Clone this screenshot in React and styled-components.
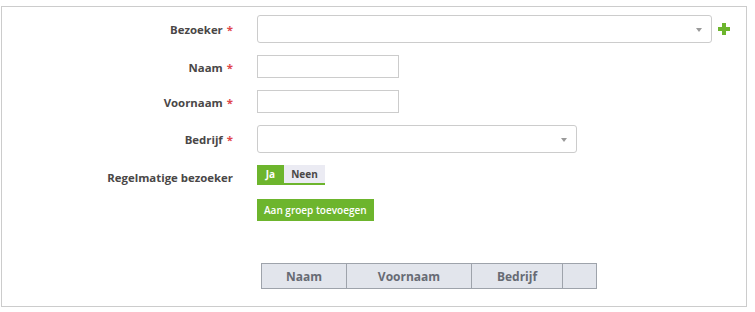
import React from "react";
import styled, { createGlobalStyle, css } from "styled-components";

const GlobalStyle = createGlobalStyle`
  html, body {
    margin: 0;
    background: #ffffff;
  }
  body {
    padding: 6px 0 0 1px;
    font-family: "Open Sans", "Liberation Sans", sans-serif;
  }
`;

const colors = {
  label: "#4a4747",
  star: "#e0474c",
  border: "#cccccc",
  green: "#6db52d",
  toggleOff: "#ebebf3",
  headBg: "#e2e5ec",
  headBorder: "#9ea3ab",
  headText: "#676b74",
};

const App = () => {
  return (
    <>
      <GlobalStyle />
      <Panel>
        <Form>
          <Label required top={7}>Bezoeker</Label>
          <Field>
            <Select wide />
            <AddButton aria-label="add">
              <svg width="12" height="12" viewBox="0 0 12 12">
                <path d="M4 0h4v4h4v4H8v4H4V8H0V4h4z" fill={colors.green} />
              </svg>
            </AddButton>
          </Field>

          <Label required>Naam</Label>
          <Field>
            <TextInput />
          </Field>

          <Label required>Voornaam</Label>
          <Field>
            <TextInput />
          </Field>

          <Label required top={7}>Bedrijf</Label>
          <Field>
            <Select />
          </Field>

          <Label>Regelmatige bezoeker</Label>
          <Field>
            <Toggle>
              <ToggleOption active>Ja</ToggleOption>
              <ToggleOption>Neen</ToggleOption>
            </Toggle>
          </Field>

          <Spacer />
          <Field>
            <GreenButton>Aan groep toevoegen</GreenButton>
          </Field>
        </Form>

        <TableWrap>
          <Table>
            <thead>
              <tr>
                <Th width={85}>Naam</Th>
                <Th width={125}>Voornaam</Th>
                <Th width={91}>Bedrijf</Th>
                <Th width={34}></Th>
              </tr>
            </thead>
          </Table>
        </TableWrap>
      </Panel>
    </>
  );
};

const Select = ({ wide }) => (
  <SelectBox wide={wide ? 1 : 0}>
    <Caret />
  </SelectBox>
);

const Panel = styled.div`
  width: 744px;
  height: 299px;
  border: 1px solid ${colors.border};
  box-sizing: content-box;
`;

const Form = styled.div`
  display: grid;
  grid-template-columns: 231px 1fr;
  column-gap: 24px;
  row-gap: 12px;
  padding-top: 8px;
  align-items: start;
`;

const Label = styled.div`
  text-align: right;
  font-size: 11.4px;
  line-height: 16px;
  font-weight: 700;
  padding-top: ${({ top }) => top || 5}px;
  color: ${colors.label};
  white-space: nowrap;

  ${({ required }) =>
    required &&
    css`
      &::after {
        content: "*";
        color: ${colors.star};
        margin-left: 4px;
      }
    `}
`;

const Spacer = styled.div``;

const Field = styled.div`
  display: flex;
  align-items: center;
`;

const SelectBox = styled.div`
  position: relative;
  box-sizing: border-box;
  width: ${({ wide }) => (wide ? "455px" : "320px")};
  height: 28px;
  border: 1px solid ${colors.border};
  border-radius: 3px;
  background: #fff;
`;

const Caret = styled.span`
  position: absolute;
  right: 9px;
  top: 12px;
  width: 0;
  height: 0;
  border-left: 3px solid transparent;
  border-right: 3px solid transparent;
  border-top: 4px solid #9a9a9a;
`;

const AddButton = styled.span`
  display: flex;
  margin-left: 6px;
`;

const TextInput = styled.input`
  box-sizing: border-box;
  width: 142px;
  height: 23px;
  border: 1px solid ${colors.border};
  border-radius: 0;
  outline: none;
  margin: 0;
`;

const Toggle = styled.div`
  display: flex;
  border-bottom: 2px solid ${colors.green};
  height: 20px;
  box-sizing: border-box;
`;

const ToggleOption = styled.div`
  display: flex;
  align-items: center;
  justify-content: center;
  font-size: 10px;
  font-weight: 700;
  color: ${({ active }) => (active ? "#ffffff" : colors.label)};
  background: ${({ active }) => (active ? colors.green : colors.toggleOff)};
  width: ${({ active }) => (active ? "27px" : "41px")};
  box-sizing: border-box;
`;

const GreenButton = styled.button`
  margin-top: 1px;
  height: 22px;
  padding: 0 7px;
  border: none;
  background: ${colors.green};
  color: #fff;
  font-family: "Open Sans", "Liberation Sans", sans-serif;
  font-size: 10px;
  font-weight: 600;
  cursor: pointer;
`;

const TableWrap = styled.div`
  padding: 42px 0 0 259px;
`;

const Table = styled.table`
  border-collapse: collapse;
  table-layout: fixed;
`;

const Th = styled.th`
  box-sizing: border-box;
  width: ${({ width }) => width}px;
  height: 25px;
  padding: 0;
  background: ${colors.headBg};
  border: 1px solid ${colors.headBorder};
  color: ${colors.headText};
  font-size: 12px;
  font-weight: 700;
  text-align: center;
`;

export default App;
